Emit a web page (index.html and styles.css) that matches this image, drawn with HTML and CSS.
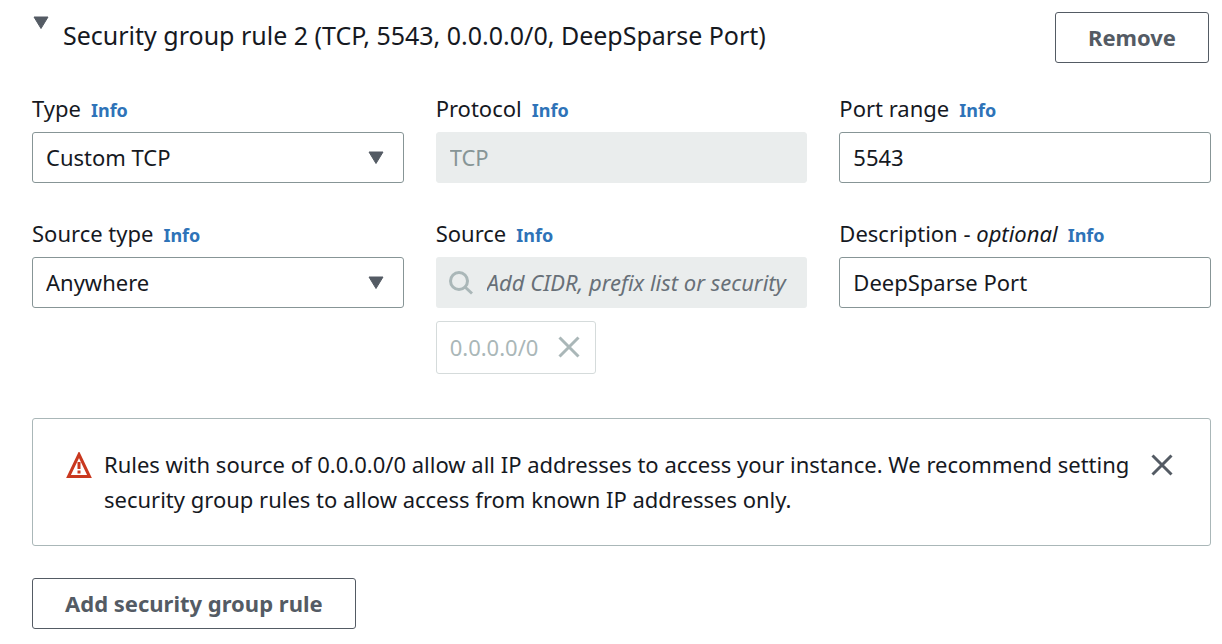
FILE: index.html
```html
<!DOCTYPE html>
<html lang="en">
<head>
<meta charset="utf-8">
<title>Security group rules</title>
<link rel="stylesheet" href="styles.css">
</head>
<body>
<main class="page">
  <header class="rule-header">
    <button class="toggle" type="button" aria-expanded="true">
      <svg class="toggle-icon" viewBox="0 0 16 14" aria-hidden="true"><path d="M1 1h14L8 12.500z"/></svg>
      <span class="rule-title">Security group rule 2 (TCP, 5543, 0.0.0.0/0, DeepSparse Port)</span>
    </button>
    <button class="button" type="button">Remove</button>
  </header>

  <form class="fields">
    <div class="field">
      <div class="label-row"><label for="type">Type</label><a class="info" href="#">Info</a></div>
      <div class="select-wrap">
        <select class="control" id="type"><option>Custom TCP</option></select>
        <svg class="caret" viewBox="0 0 16 14" aria-hidden="true"><path d="M1 1h14L8 12.500z"/></svg>
      </div>
    </div>
    <div class="field">
      <div class="label-row"><label for="protocol">Protocol</label><a class="info" href="#">Info</a></div>
      <input class="control" id="protocol" type="text" value="TCP" disabled>
    </div>
    <div class="field">
      <div class="label-row"><label for="port">Port range</label><a class="info" href="#">Info</a></div>
      <input class="control" id="port" type="text" value="5543">
    </div>
    <div class="field">
      <div class="label-row"><label for="source-type">Source type</label><a class="info" href="#">Info</a></div>
      <div class="select-wrap">
        <select class="control" id="source-type"><option>Anywhere</option></select>
        <svg class="caret" viewBox="0 0 16 14" aria-hidden="true"><path d="M1 1h14L8 12.500z"/></svg>
      </div>
    </div>
    <div class="field">
      <div class="label-row"><label for="source">Source</label><a class="info" href="#">Info</a></div>
      <div class="search">
        <svg class="search-icon" viewBox="0 0 24 24" aria-hidden="true"><circle cx="10" cy="10" r="8.500"/><path d="M16 16l7 6.500"/></svg>
        <input class="search-input" id="source" type="text" placeholder="Add CIDR, prefix list or security" disabled>
      </div>
      <div class="token"><span>0.0.0.0/0</span>
        <button class="icon-button" type="button" aria-label="Remove 0.0.0.0/0" disabled><svg class="cross" viewBox="0 0 22 22" aria-hidden="true"><path d="M1.500 1.500l19 19M20.500 1.500l-19 19"/></svg></button>
      </div>
    </div>
    <div class="field">
      <div class="label-row"><label for="description">Description - <em>optional</em></label><a class="info" href="#">Info</a></div>
      <input class="control" id="description" type="text" value="DeepSparse Port">
    </div>
  </form>

  <section class="alert" role="alert">
    <svg class="warning" viewBox="0 0 26 26" aria-hidden="true"><path d="M13 2.500L23.500 24.500H2.500z"/><path d="M13 10v7M13 18.500v3"/></svg>
    <p class="alert-text">Rules with source of 0.0.0.0/0 allow all IP addresses to access your instance. We recommend setting security group rules to allow access from known IP addresses only.</p>
    <button class="icon-button dismiss" type="button" aria-label="Dismiss"><svg class="cross" viewBox="0 0 22 22" aria-hidden="true"><path d="M1.500 1.500l19 19M20.500 1.500l-19 19"/></svg></button>
  </section>

  <button class="button" type="button">Add security group rule</button>
</main>
</body>
</html>
```
FILE: styles.css
```css
* { box-sizing: border-box; }
body {
  margin: 0;
  background: #fff;
  color: #16191f;
  font: 22px/32px "Noto Sans", "Open Sans", sans-serif;
}
button, input, select { font: inherit; color: inherit; }
.page { padding: 12px 11px 14px 32px; }
.rule-header {
  display: flex;
  align-items: flex-start;
  justify-content: space-between;
  padding-right: 2px;
}
.toggle {
  display: flex;
  align-items: flex-start;
  gap: 14px;
  padding: 4px 0 0 1px;
  border: 0;
  background: none;
  text-align: left;
}
.toggle-icon, .caret {
  width: 16px;
  height: 14px;
  fill: #545b64;
  stroke: #545b64;
  stroke-width: 1;
  stroke-linejoin: round;
}
.toggle-icon { flex: none; }
.rule-title { font-size: 25px; line-height: 38px; }
.button {
  height: 51px;
  padding: 0 32px 2px;
  border: 1px solid #545b64;
  border-radius: 3px;
  background: #fff;
  color: #545b64;
  font-weight: 700;
  white-space: nowrap;
}
.fields {
  display: grid;
  grid-template-columns: repeat(3, minmax(0, 1fr));
  gap: 34px 32px;
  margin-top: 29px;
}
.label-row {
  display: flex;
  align-items: baseline;
  gap: 10px;
  height: 40px;
  white-space: nowrap;
}
.info { color: #2e73b8; font-size: 18px; font-weight: 700; text-decoration: none; }
.control {
  display: block;
  width: 100%;
  height: 51px;
  padding: 0 13px 2px;
  border: 1px solid #879596;
  border-radius: 3px;
  background: #fff;
  appearance: none;
}
.control:disabled { border-color: #eaeded; background: #eaeded; color: #879596; }
.select-wrap { position: relative; }
.caret {
  position: absolute;
  top: 19px;
  right: 20px;
  pointer-events: none;
}
.search {
  display: flex;
  align-items: center;
  gap: 14px;
  height: 51px;
  padding: 0 13px;
  border-radius: 3px;
  background: #eaeded;
}
.search-icon { flex: none; width: 24px; height: 24px; fill: none; stroke: #aab7b8; stroke-width: 3; }
.search-input { flex: 1; min-width: 0; padding: 0 0 2px; border: 0; background: none; }
.search-input::placeholder { color: #687078; font-style: italic; }
.token {
  display: inline-flex;
  align-items: center;
  gap: 20px;
  height: 53px;
  margin-top: 13px;
  padding: 0 15px 2px 13px;
  border: 1px solid #d5dbdb;
  border-radius: 3px;
  color: #aab7b8;
}
.icon-button { display: flex; padding: 0; border: 0; background: none; color: inherit; }
.cross { width: 22px; height: 22px; fill: none; stroke: currentColor; stroke-width: 3; }
.alert {
  display: flex;
  align-items: flex-start;
  margin: 44px 0 32px;
  padding: 28px 37px 28px 33px;
  border: 1px solid #aab7b8;
  border-radius: 3px;
}
.warning { flex: none; width: 26px; height: 26px; margin: 5px 12px 0 0; fill: none; stroke: #c9381f; stroke-width: 3; }
.alert-text { flex: 1; margin: 0; line-height: 35px; }
.dismiss { margin: 7px 0 0 8px; color: #545b64; }
```
